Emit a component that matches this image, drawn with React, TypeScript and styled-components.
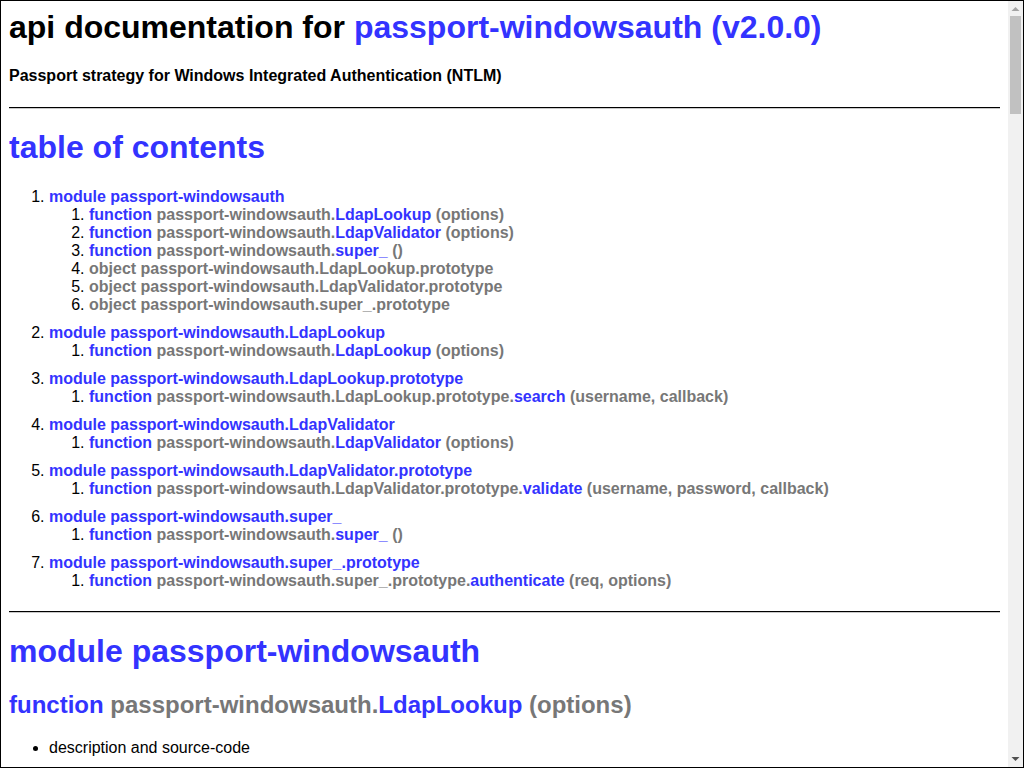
import React from "react";
import styled, { createGlobalStyle } from "styled-components";

const GlobalStyle = createGlobalStyle`
  html, body {
    margin: 0;
    padding: 0;
    background: #fff;
  }
  body {
    font-family: "Liberation Sans", Arial, Helvetica, sans-serif;
    color: #000;
  }
`;

const Frame = styled.div`
  box-sizing: border-box;
  height: 100vh;
  border: 1px solid #000;
  display: flex;
  background: #fff;
  overflow: hidden;
`;

const Viewport = styled.div`
  flex: 1;
  min-width: 0;
  overflow: hidden;
`;

const ScrollBar = styled.div`
  width: 15px;
  flex: none;
  display: flex;
  flex-direction: column;
  background: #f1f1f1;
`;

const ArrowButton = styled.div`
  height: 15px;
  flex: none;
  display: flex;
  svg {
    display: block;
  }
`;

const Track = styled.div`
  flex: 1;
  display: flex;
  flex-direction: column;
`;

const Thumb = styled.div`
  height: 98px;
  margin: 0 2px;
  background: #c1c1c1;
`;

const Doc = styled.div`
  padding: 8px 8px 8px;
  font-family: "Liberation Sans", Arial, Helvetica, sans-serif;
`;

const Title = styled.h1`
  font-size: 32px;
  font-weight: bold;
  margin: 0 0 21.44px;
`;

const Subtitle = styled.h4`
  font-size: 16px;
  font-weight: bold;
  margin: 21.28px 0 22px;
`;

const Rule = styled.hr<{ $gap?: number }>`
  height: 0;
  border: 0;
  border-top: 1px solid #000;
  border-bottom: 1px solid #c8c8c8;
  margin: ${(p) => p.$gap ?? 22}px 0 0;
`;

const SectionHeading = styled.h1`
  font-size: 32px;
  font-weight: bold;
  margin: 20px 0 21.44px;
`;

const ItemHeading = styled.h2`
  font-size: 24px;
  font-weight: bold;
  margin: 19.92px 0;
`;

const Link = styled.a`
  color: #33f;
  font-weight: bold;
  text-decoration: none;
`;

const Sig = styled.span`
  color: #777;
  font-weight: bold;
`;

const TocList = styled.ol`
  margin: 21.44px 0 16px;
  padding-left: 40px;
`;

const SubList = styled.ol`
  margin: 0;
  padding-left: 40px;
`;

const ModuleItem = styled.li`
  margin-top: 10px;
`;

const Bullets = styled.ul`
  margin: 16px 0;
  padding-left: 40px;
`;

const CodePre = styled.pre`
  background: #eef;
  border: 1px solid;
  color: #777;
  padding: 5px;
  white-space: pre-wrap;
  font-family: "Liberation Mono", "Courier New", monospace;
  font-size: 13px;
  margin: 13px 0;
`;

const Footer = styled.div`
  margin-top: 20px;
  text-align: center;
  font-size: 16px;
`;

type Entry = {
  kind: "function" | "object";
  base: string;
  name?: string;
  args?: string;
  source?: string;
};

type Module = {
  name: string;
  entries: Entry[];
};

const SRC_LOOKUP = `function LdapLookup(options){
  if(!(this instanceof LdapLookup)) {
    return new LdapLookup(options);
  }

  this._search_query = options.search_query ||
    '(&(objectclass=user)(|(sAMAccountName={0})(UserPrincipalName={0})))';

  this._search_base = options.base;
  this._attributes = options.attributes;

  this._client = options.client ? options.client : ldap.createClient({
    url:             options.url,
    maxConnections:  options.maxConnections || 10,
    bindDN:          options.bindDN,
    credentials:     options.bindCredentials,
    tlsOptions:      options.tlsOptions,
    reconnect:       options.reconnect
  });

  this._client.on('error', function(e){
    console.log('LDAP connection error:', e);
  });

  var self = this;
  this._client.on('connect', function(){
    self.clientConnected = true;
  });
}`;

const SRC_VALIDATOR = `function LdapValidator(options){
  this._options = options;
  this._lookup = new LdapLookup(options);
}`;

const SRC_STRATEGY = `function Strategy(options, verify) {
  if (typeof options == 'function') {
    verify = options;
    options = {};
  }

  if (!verify) throw new Error('windows authentication strategy requires a verify function');

  if(!options.integrated && (!options.ldap || (!options.ldap.url && !options.ldap.client))) {
    throw new Error('ldap url should be provided in order to validate user and passwords');
  }

  passport.Strategy.call(this);

  this.name = 'WindowsAuthentication';
  this._verify = verify;
  this._passReqToCallback = options.passReqToCallback;
  this._integrated = typeof options.integrated !== 'undefined' ?
    options.integrated :
    true;

  if (options.ldap) {
    if (this._integrated) {
      this._ldapLookup = new LdapLookup(options.ldap);
    } else {
      this._ldapValidator = new LdapValidator(options.ldap);
    }
  }
}`;

const SRC_SEARCH = `function (username, callback) {
  var self = this;
  if(!this.clientConnected){
    return setTimeout(function () {
      self.search(username, callback);
    }, 100);
  }
  var opts = {
    scope: 'sub',
    filter: this._search_query.replace(/\\{0\\}/ig, username)
  };
  this._client.search(this._search_base, opts, function(err, res){
    var entries = [];
    res.on('searchEntry', function(entry) {
      entries.push(entry);
    });
    res.on('end', function() {
      if(entries.length === 0) return callback(null, null);
      callback(null, entries[0].object);
    });
  });
}`;

const SRC_VALIDATE = `function (username, password, callback) {
  if(!password || password === '') return callback(null, null);
  var self = this;
  this._lookup.search(username, function (err, up) {
    if(err) return callback(err);
    if(!up) return callback(null, null);
    var client = ldap.createClient({
      url: self._options.url,
      tlsOptions: self._options.tlsOptions
    });
    client.bind(up.dn, password, function(err) {
      client.unbind();
      if(err) return callback(null, null);
      callback(null, up);
    });
  });
}`;

const SRC_AUTHENTICATE = `function (req, options) {
  var self = this;

  function verify (userProfile) {
    function verified(err, user, info) {
      if (err) { return self.error(err); }
      if (!user) { return self.fail(info); }
      self.success(user, info);
    }
    self._verify(userProfile, verified);
  }

  var userName = req.headers['x-iisnode-logon_user'];
  if (!userName) {
    return self.fail();
  }

  if (this._ldapLookup) {
    this._ldapLookup.search(userName, function (err, user) {
      if (err) return self.error(err);
      if (!user) return self.fail();
      verify(user);
    });
  } else {
    verify({ name: userName, id: userName });
  }
}`;

const P = "passport-windowsauth";

const modules: Module[] = [
  {
    name: P,
    entries: [
      { kind: "function", base: `${P}.`, name: "LdapLookup", args: "(options)", source: SRC_LOOKUP },
      { kind: "function", base: `${P}.`, name: "LdapValidator", args: "(options)", source: SRC_VALIDATOR },
      { kind: "function", base: `${P}.`, name: "super_", args: "()", source: SRC_STRATEGY },
      { kind: "object", base: `${P}.LdapLookup.prototype` },
      { kind: "object", base: `${P}.LdapValidator.prototype` },
      { kind: "object", base: `${P}.super_.prototype` },
    ],
  },
  {
    name: `${P}.LdapLookup`,
    entries: [{ kind: "function", base: `${P}.`, name: "LdapLookup", args: "(options)", source: SRC_LOOKUP }],
  },
  {
    name: `${P}.LdapLookup.prototype`,
    entries: [
      { kind: "function", base: `${P}.LdapLookup.prototype.`, name: "search", args: "(username, callback)", source: SRC_SEARCH },
    ],
  },
  {
    name: `${P}.LdapValidator`,
    entries: [{ kind: "function", base: `${P}.`, name: "LdapValidator", args: "(options)", source: SRC_VALIDATOR }],
  },
  {
    name: `${P}.LdapValidator.prototype`,
    entries: [
      {
        kind: "function",
        base: `${P}.LdapValidator.prototype.`,
        name: "validate",
        args: "(username, password, callback)",
        source: SRC_VALIDATE,
      },
    ],
  },
  {
    name: `${P}.super_`,
    entries: [{ kind: "function", base: `${P}.`, name: "super_", args: "()", source: SRC_STRATEGY }],
  },
  {
    name: `${P}.super_.prototype`,
    entries: [
      { kind: "function", base: `${P}.super_.prototype.`, name: "authenticate", args: "(req, options)", source: SRC_AUTHENTICATE },
    ],
  },
];

function Signature({ entry }: { entry: Entry }) {
  if (entry.kind === "object") {
    return <Sig>object {entry.base}</Sig>;
  }
  return (
    <Link href="#">
      function <Sig>{entry.base}</Sig>
      {entry.name}
      <Sig> {entry.args}</Sig>
    </Link>
  );
}

function UpArrow() {
  return (
    <svg width="15" height="15" viewBox="0 0 15 15" aria-hidden="true">
      <polygon points="3.5,10 7.5,6 11.5,10" fill="#a3a3a3" />
    </svg>
  );
}

function DownArrow() {
  return (
    <svg width="15" height="15" viewBox="0 0 15 15" aria-hidden="true">
      <polygon points="3.5,5 11.5,5 7.5,9" fill="#505050" />
    </svg>
  );
}

export default function App() {
  return (
    <>
      <GlobalStyle />
      <Frame>
        <Viewport>
          <Doc>
            <Title>
              api documentation for <Link href="#">passport-windowsauth (v2.0.0)</Link>
            </Title>
            <Subtitle>Passport strategy for Windows Integrated Authentication (NTLM)</Subtitle>

            <Rule />
            <SectionHeading>
              <Link href="#">table of contents</Link>
            </SectionHeading>
            <TocList>
              {modules.map((m) => (
                <ModuleItem key={m.name}>
                  <Link href="#">module {m.name}</Link>
                  <SubList>
                    {m.entries.map((e, i) => (
                      <li key={i}>
                        <Signature entry={e} />
                      </li>
                    ))}
                  </SubList>
                </ModuleItem>
              ))}
            </TocList>

            {modules.map((m) => (
              <section key={m.name}>
                <Rule $gap={21} />
                <SectionHeading>
                  <Link href="#">module {m.name}</Link>
                </SectionHeading>
                {m.entries
                  .filter((e) => e.kind === "function")
                  .map((e, i) => (
                    <div key={i}>
                      <ItemHeading>
                        <Signature entry={e} />
                      </ItemHeading>
                      <Bullets>
                        <li>
                          description and source-code
                          <CodePre>{e.source}</CodePre>
                        </li>
                        <li>
                          example usage
                          <CodePre>n/a</CodePre>
                        </li>
                      </Bullets>
                    </div>
                  ))}
              </section>
            ))}

            <Footer>
              [ this document was created with <Link href="#">utility2</Link> ]
            </Footer>
          </Doc>
        </Viewport>
        <ScrollBar aria-hidden="true">
          <ArrowButton>
            <UpArrow />
          </ArrowButton>
          <Track>
            <Thumb />
          </Track>
          <ArrowButton>
            <DownArrow />
          </ArrowButton>
        </ScrollBar>
      </Frame>
    </>
  );
}
